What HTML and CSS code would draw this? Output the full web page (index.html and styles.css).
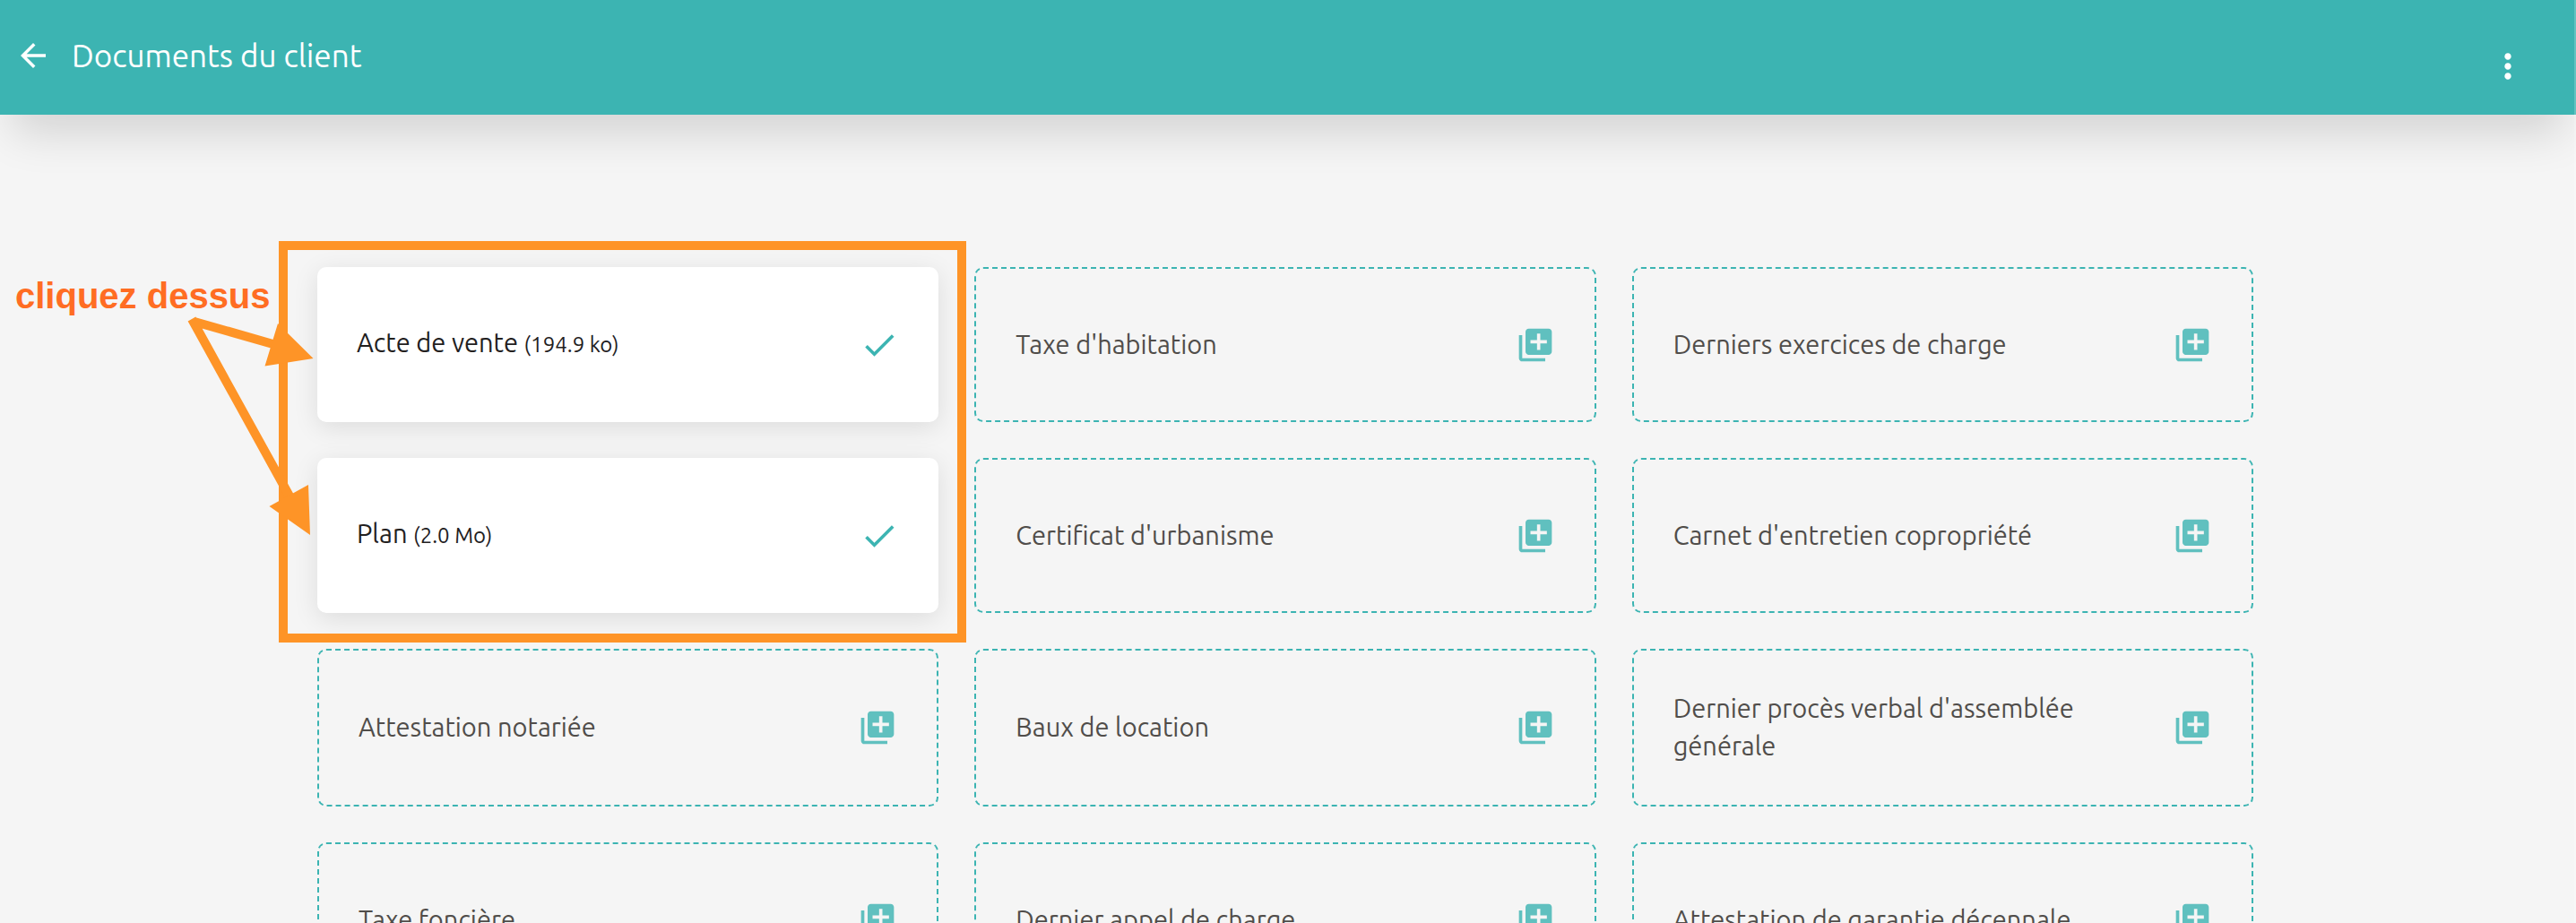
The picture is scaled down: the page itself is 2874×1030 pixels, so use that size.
FILE: index.html
```
<!DOCTYPE html>
<html lang="fr">
<head>
    <meta charset="UTF-8">
    <meta name="viewport" content="width=device-width, initial-scale=1.0">
    <title>Documents du client</title>
    <link rel="stylesheet" href="styles.css">
</head>
<body>
    <!-- Shared icons -->
    <svg class="sprite" aria-hidden="true">
        <symbol id="icon-check" viewBox="0 0 24 24">
            <path d="M9 16.17L4.83 12l-1.42 1.41L9 19 21 7l-1.41-1.41z"/>
        </symbol>
        <symbol id="icon-add" viewBox="0 0 24 24">
            <path d="M4 6H2v14c0 1.1.9 2 2 2h14v-2H4V6zm16-4H8c-1.1 0-2 .9-2 2v12c0 1.1.9 2 2 2h12c1.1 0 2-.9 2-2V4c0-1.1-.9-2-2-2zm-1 9h-4v4h-2v-4H9V9h4V5h2v4h4v2z"/>
        </symbol>
    </svg>

    <div class="page">
        <header class="topbar">
            <button class="icon-button" type="button" aria-label="Retour">
                <svg class="icon-back" viewBox="0 0 24 24"><path d="M20 11H7.83l5.59-5.59L12 4l-8 8 8 8 1.41-1.41L7.83 13H20v-2z"/></svg>
            </button>
            <h1 class="topbar-title">Documents du client</h1>
            <button class="icon-button menu-button" type="button" aria-label="Menu">
                <svg class="icon" viewBox="0 0 24 24"><path d="M12 8c1.1 0 2-.9 2-2s-.9-2-2-2-2 .9-2 2 .9 2 2 2zm0 2c-1.1 0-2 .9-2 2s.9 2 2 2 2-.9 2-2-.9-2-2-2zm0 6c-1.1 0-2 .9-2 2s.9 2 2 2 2-.9 2-2-.9-2-2-2z"/></svg>
            </button>
        </header>

        <main class="content">
            <div class="documents">
                <button class="card done" type="button">
                    <span class="card-label">Acte de vente <small>(194.9 ko)</small></span>
                    <svg class="icon"><use href="#icon-check"/></svg>
                </button>
                <button class="card" type="button">
                    <span class="card-label">Taxe d'habitation</span>
                    <svg class="icon"><use href="#icon-add"/></svg>
                </button>
                <button class="card" type="button">
                    <span class="card-label">Derniers exercices de charge</span>
                    <svg class="icon"><use href="#icon-add"/></svg>
                </button>

                <button class="card done" type="button">
                    <span class="card-label">Plan <small>(2.0 Mo)</small></span>
                    <svg class="icon"><use href="#icon-check"/></svg>
                </button>
                <button class="card" type="button">
                    <span class="card-label">Certificat d'urbanisme</span>
                    <svg class="icon"><use href="#icon-add"/></svg>
                </button>
                <button class="card" type="button">
                    <span class="card-label">Carnet d'entretien copropriété</span>
                    <svg class="icon"><use href="#icon-add"/></svg>
                </button>

                <button class="card" type="button">
                    <span class="card-label">Attestation notariée</span>
                    <svg class="icon"><use href="#icon-add"/></svg>
                </button>
                <button class="card" type="button">
                    <span class="card-label">Baux de location</span>
                    <svg class="icon"><use href="#icon-add"/></svg>
                </button>
                <button class="card" type="button">
                    <span class="card-label">Dernier procès verbal d'assemblée générale</span>
                    <svg class="icon"><use href="#icon-add"/></svg>
                </button>

                <button class="card" type="button">
                    <span class="card-label">Taxe foncière</span>
                    <svg class="icon"><use href="#icon-add"/></svg>
                </button>
                <button class="card" type="button">
                    <span class="card-label">Dernier appel de charge</span>
                    <svg class="icon"><use href="#icon-add"/></svg>
                </button>
                <button class="card" type="button">
                    <span class="card-label">Attestation de garantie décennale</span>
                    <svg class="icon"><use href="#icon-add"/></svg>
                </button>

                <!-- Help overlay -->
                <div class="help-frame"></div>
                <p class="help-text">cliquez dessus</p>
                <svg class="help-arrows" viewBox="0 0 150 250" aria-hidden="true">
                    <path class="shaft" d="M17 9L108 35M14 6L126 209"/>
                    <path d="M149.500 50L110 11L95.500 58.500zM146 247L144 191L100.500 215z"/>
                </svg>
            </div>
        </main>
    </div>
</body>
</html>
```

FILE: styles.css
```
* {
    box-sizing: border-box;
}
body {
    margin: 0;
    background: #f5f5f5;
    color: #504d4a;
    font-family: Ubuntu, "Open Sans", "Noto Sans", sans-serif;
}
button {
    font: inherit;
    color: inherit;
    cursor: pointer;
}
.sprite {
    position: absolute;
    width: 0;
    height: 0;
}
.page {
    position: relative;
    height: 100vh;
    overflow: hidden;
}
/* scrollbar track */
.page::after {
    content: "";
    position: absolute;
    top: 0;
    right: 0;
    bottom: 0;
    width: 2px;
    background: rgba(255, 255, 255, 0.2);
}

/* Top bar */
.topbar {
    display: flex;
    align-items: center;
    height: 128px;
    padding: 0 54px 4px 16px;
    background: #3cb4b2;
    color: #fff;
    box-shadow: 0 34px 50px -14px rgba(0, 0, 0, 0.14);
}
.topbar-title {
    flex: 1;
    margin: 0 0 0 22px;
    font-size: 35px;
    line-height: 48px;
    font-weight: 400;
}
.icon-button {
    display: flex;
    padding: 0;
    border: 0;
    background: none;
}
.menu-button {
    margin-top: 24px;
}
.icon,
.icon-back {
    flex: none;
    width: 44px;
    height: 44px;
    fill: currentColor;
}
.icon-back {
    width: 42px;
    height: 42px;
}

/* Documents */
.content {
    padding: 170px 6px 40px 0;
}
.documents {
    position: relative;
    display: grid;
    grid-template-columns: repeat(3, 1fr);
    gap: 40px;
    max-width: 2160px;
    margin: 0 auto;
}
.card {
    display: flex;
    align-items: center;
    justify-content: space-between;
    gap: 40px;
    min-height: 173px;
    padding: 43px 44px;
    border: 2px dashed #3cb4b2;
    border-radius: 10px;
    background: none;
    text-align: left;
}
.card-label {
    max-width: 500px;
    padding-bottom: 2px;
    font-size: 29px;
    line-height: 42px;
}
.card-label small {
    font-size: 24px;
}
.card .icon {
    color: #3cb4b2;
    opacity: 0.8;
}
.card.done {
    border: 0;
    background: #fff;
    color: #22201e;
    box-shadow: 0 6px 28px rgba(0, 0, 0, 0.1);
}
.card.done .icon {
    opacity: 1;
}

/* Help overlay */
.help-frame {
    position: absolute;
    top: -29px;
    left: -43px;
    width: 767px;
    height: 448px;
    border: 10px solid #fe9427;
    pointer-events: none;
}
.help-text {
    position: absolute;
    top: 8px;
    left: -337px;
    margin: 0;
    color: #ff6d23;
    font-family: "Liberation Sans", Arial, sans-serif;
    font-size: 40px;
    line-height: 48px;
    font-weight: 700;
    white-space: nowrap;
}
.help-arrows {
    position: absolute;
    top: 52px;
    left: -154px;
    width: 150px;
    height: 250px;
    fill: #fe9427;
    pointer-events: none;
}
.help-arrows .shaft {
    stroke: #fe9427;
    stroke-width: 10;
}
```
